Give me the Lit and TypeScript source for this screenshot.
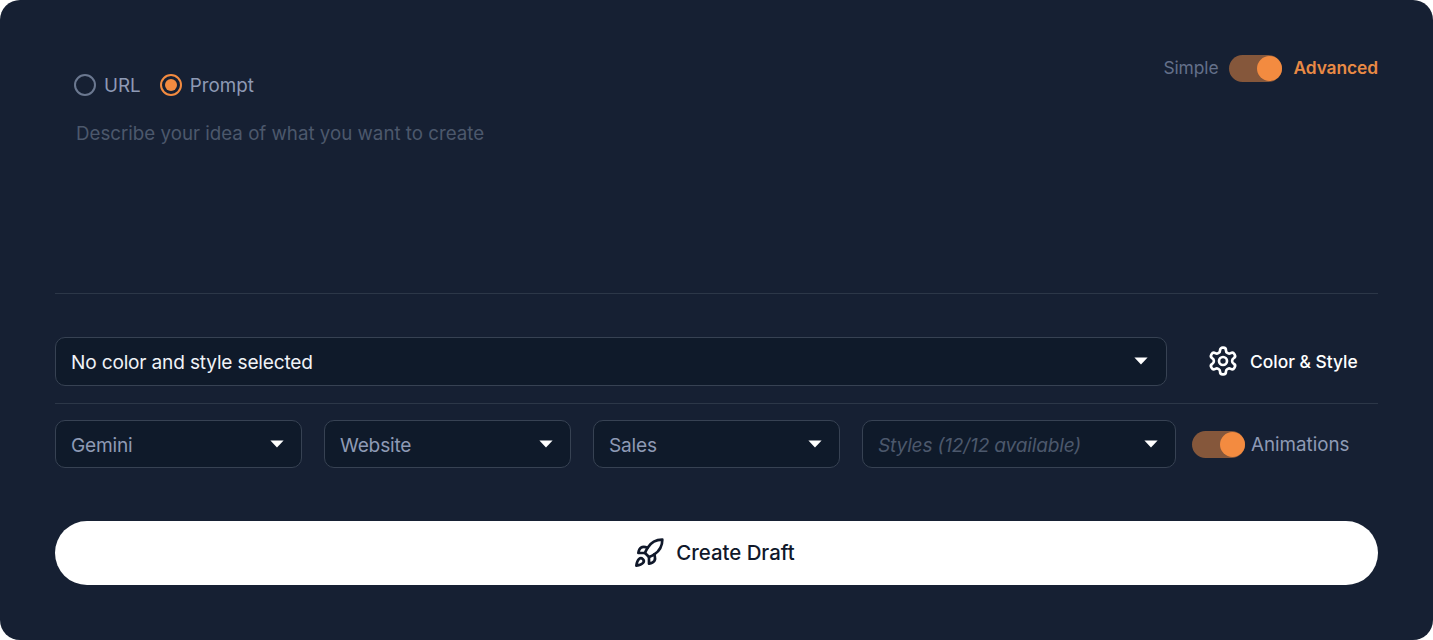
import { LitElement, html, css, svg } from "lit";
import { customElement, property } from "lit/decorators.js";

@customElement("toggle-switch")
class ToggleSwitch extends LitElement {
  static styles = css`
    :host { display: block; flex: none; }
    .track { box-sizing: border-box; width: 53px; height: 27px; border-radius: 14px; background: #85573b; display: flex; justify-content: flex-end; align-items: center; padding-right: 0.5px; }
    .knob { width: 25px; height: 25px; border-radius: 50%; background: #f38b40; }
  `;
  render() {
    return html`<div class="track"><div class="knob"></div></div>`;
  }
}

@customElement("select-box")
class SelectBox extends LitElement {
  @property() label = "";
  static styles = css`
    :host { display: block; box-sizing: border-box; border: 1px solid #374253; border-radius: 10px; background: #0f1a2a; }
    .inner { height: 100%; display: flex; align-items: center; justify-content: space-between; padding: 0 var(--caret-inset, 17px) 0 15px; }
    .label { white-space: nowrap; padding-top: 1px; font-size: 19.1px; letter-spacing: -0.18px; }
    svg { display: block; flex: none; }
  `;
  render() {
    return html`<div class="inner"><span class="label">${this.label}</span>
      <svg width="14" height="8" viewBox="0 0 14 8"><path d="M.4.6h13.2L7 7.6z" fill="#fff"/></svg></div>`;
  }
}

const gear = svg`<path d="M12.22 2h-.44a2 2 0 0 0-2 2v.18a2 2 0 0 1-1 1.73l-.43.25a2 2 0 0 1-2 0l-.15-.08a2 2 0 0 0-2.73.73l-.22.38a2 2 0 0 0 .73 2.73l.15.1a2 2 0 0 1 1 1.72v.51a2 2 0 0 1-1 1.74l-.15.09a2 2 0 0 0-.73 2.73l.22.38a2 2 0 0 0 2.73.73l.15-.08a2 2 0 0 1 2 0l.43.25a2 2 0 0 1 1 1.73V20a2 2 0 0 0 2 2h.44a2 2 0 0 0 2-2v-.18a2 2 0 0 1 1-1.73l.43-.25a2 2 0 0 1 2 0l.15.08a2 2 0 0 0 2.73-.73l.22-.39a2 2 0 0 0-.73-2.73l-.15-.08a2 2 0 0 1-1-1.74v-.5a2 2 0 0 1 1-1.74l.15-.09a2 2 0 0 0 .73-2.73l-.22-.38a2 2 0 0 0-2.73-.73l-.15.08a2 2 0 0 1-2 0l-.43-.25a2 2 0 0 1-1-1.73V4a2 2 0 0 0-2-2z"/><circle cx="12" cy="12" r="3"/>`;
const rocket = svg`<path d="M4.5 16.5c-1.5 1.26-2 5-2 5s3.74-.5 5-2c.71-.84.7-2.13-.09-2.91a2.18 2.18 0 0 0-2.91-.09z"/><path d="m12 15-3-3a22 22 0 0 1 2-3.95A12.88 12.88 0 0 1 22 2c0 2.72-.78 7.5-6 11a22.35 22.35 0 0 1-4 2z"/><path d="M9 12H4s.55-3.03 2-4c1.62-1.08 5 0 5 0"/><path d="M12 15v5s3.03-.55 4-2c1.08-1.62 0-5 0-5"/>`;

@customElement("app-root")
class AppRoot extends LitElement {
  static styles = css`
    :host { display: block; font-family: Inter, "Liberation Sans", sans-serif; font-size: 18.8px; line-height: 24px; color: #8e9ab5; }
    .panel { box-sizing: border-box; height: 640px; padding: 54px 55px 0; background: #162033; border-radius: 20px; display: flex; flex-direction: column; }
    .top { display: flex; justify-content: space-between; align-items: flex-start; height: 66px; }
    .radios { display: flex; align-items: center; padding: 18px 0 0 19px; }
    .radios span { padding-top: 2px; }
    .radio { box-sizing: border-box; width: 22px; height: 22px; border: 2px solid #6b7890; border-radius: 50%; margin-right: 8px; display: flex; align-items: center; justify-content: center; }
    .radio.on { border-color: #f38b40; margin-left: 19px; }
    .dot { width: 12px; height: 12px; border-radius: 50%; background: #f38b40; }
    .mode { display: flex; align-items: center; height: 28px; font-size: 17.4px; gap: 11px; }
    .simple { color: #64708a; letter-spacing: -0.1px; }
    .adv { color: #e98a45; font-weight: 600; letter-spacing: -0.1px; }
    .prompt { height: 174px; box-sizing: border-box; border-bottom: 1px solid #2c3748; padding: 2px 0 0 21px; font-size: 18.73px; color: #4c586c; }
    .row { display: flex; align-items: center; }
    .one { height: 110px; border-bottom: 1px solid #2c3748; box-sizing: border-box; padding-top: 25px; }
    .wide { width: 1112px; height: 49px; color: #f0f3f7; --caret-inset: 18px; }
    .gear { margin: 0 11px 0 40px; color: #fff; }
    .cs { padding-top: 1px; font-size: 17.4px; font-weight: 500; color: #fff; }
    .two { padding-top: 16px; }
    .sel { width: 247px; height: 48px; margin-right: 22px; }
    .styles { width: 314px; margin-right: 16px; font-style: italic; color: #4c586c; }
    .anim { padding: 1px 0 0 6px; font-size: 18.75px; }
    .create { margin-top: 53px; height: 64px; border-radius: 32px; background: #fff; color: #10182a; display: flex; align-items: center; justify-content: center; gap: 11px; font-size: 20.4px; font-weight: 500; padding-right: 5px; }
    svg { display: block; flex: none; fill: none; stroke: currentColor; stroke-width: 2; stroke-linecap: round; stroke-linejoin: round; }
  `;
  render() {
    return html`<div class="panel">
      <div class="top">
        <div class="radios"><div class="radio"></div><span>URL</span><div class="radio on"><div class="dot"></div></div><span>Prompt</span></div>
        <div class="mode"><span class="simple">Simple</span><toggle-switch></toggle-switch><span class="adv">Advanced</span></div>
      </div>
      <div class="prompt">Describe your idea of what you want to create</div>
      <div class="row one"><select-box class="wide" label="No color and style selected"></select-box>
        <svg class="gear" width="32" height="32" viewBox="0 0 24 24">${gear}</svg><span class="cs">Color &amp; Style</span></div>
      <div class="row two">
        <select-box class="sel" label="Gemini"></select-box><select-box class="sel" label="Website"></select-box><select-box class="sel" label="Sales"></select-box>
        <select-box class="sel styles" label="Styles (12/12 available)"></select-box><toggle-switch></toggle-switch><span class="anim">Animations</span></div>
      <div class="create"><svg width="32" height="32" viewBox="0 0 24 24">${rocket}</svg><span>Create Draft</span></div>
    </div>`;
  }
}
